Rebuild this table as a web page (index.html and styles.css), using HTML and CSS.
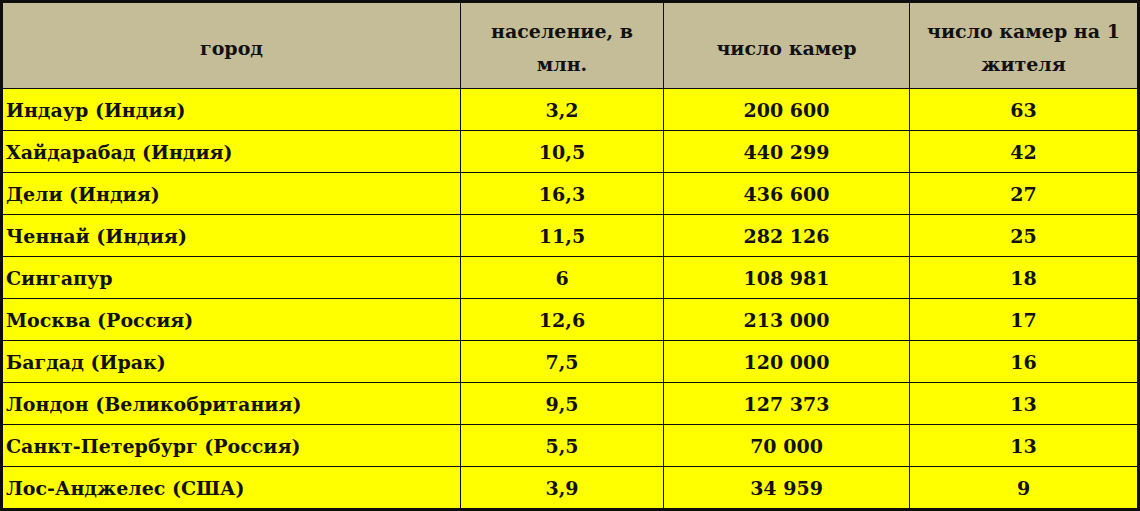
FILE: index.html
```html
<!DOCTYPE html>
<html lang="ru">
<head>
<meta charset="utf-8">
<link rel="stylesheet" href="styles.css">
</head>
<body>
<div class="grid">
  <div class="cell head">город</div>
  <div class="cell head">население, в<br>млн.</div>
  <div class="cell head">число камер</div>
  <div class="cell head">число камер на 1<br>жителя</div>

  <div class="cell city">Индаур (Индия)</div><div class="cell">3,2</div><div class="cell">200 600</div><div class="cell">63</div>
  <div class="cell city">Хайдарабад (Индия)</div><div class="cell">10,5</div><div class="cell">440 299</div><div class="cell">42</div>
  <div class="cell city">Дели (Индия)</div><div class="cell">16,3</div><div class="cell">436 600</div><div class="cell">27</div>
  <div class="cell city">Ченнай (Индия)</div><div class="cell">11,5</div><div class="cell">282 126</div><div class="cell">25</div>
  <div class="cell city">Сингапур</div><div class="cell">6</div><div class="cell">108 981</div><div class="cell">18</div>
  <div class="cell city">Москва (Россия)</div><div class="cell">12,6</div><div class="cell">213 000</div><div class="cell">17</div>
  <div class="cell city">Багдад (Ирак)</div><div class="cell">7,5</div><div class="cell">120 000</div><div class="cell">16</div>
  <div class="cell city">Лондон (Великобритания)</div><div class="cell">9,5</div><div class="cell">127 373</div><div class="cell">13</div>
  <div class="cell city">Санкт-Петербург (Россия)</div><div class="cell">5,5</div><div class="cell">70 000</div><div class="cell">13</div>
  <div class="cell city">Лос-Анджелес (США)</div><div class="cell">3,9</div><div class="cell">34 959</div><div class="cell">9</div>
</div>
</body>
</html>
```
FILE: styles.css
```css
html, body {
  margin: 0;
  padding: 0;
  background: #ffffff;
}
.grid {
  width: 1140px;
  height: 511px;
  box-sizing: border-box;
  padding: 3px;
  background: #0d0d0d;
  display: grid;
  grid-template-columns: 457px 202px 245px 227px;
  grid-template-rows: 85px repeat(10, 41px);
  gap: 1px;
  font-family: "DejaVu Serif", "Liberation Serif", serif;
  font-weight: bold;
  color: #111111;
}
.cell {
  background: #ffff00;
  display: flex;
  align-items: center;
  justify-content: center;
  text-align: center;
  font-size: 19px;
}
.cell.head {
  background: #c4bd97;
  font-size: 19px;
  line-height: 33px;
  padding-top: 5px;
  box-sizing: border-box;
}
.cell.city {
  justify-content: flex-start;
  padding-left: 3px;
}
```
